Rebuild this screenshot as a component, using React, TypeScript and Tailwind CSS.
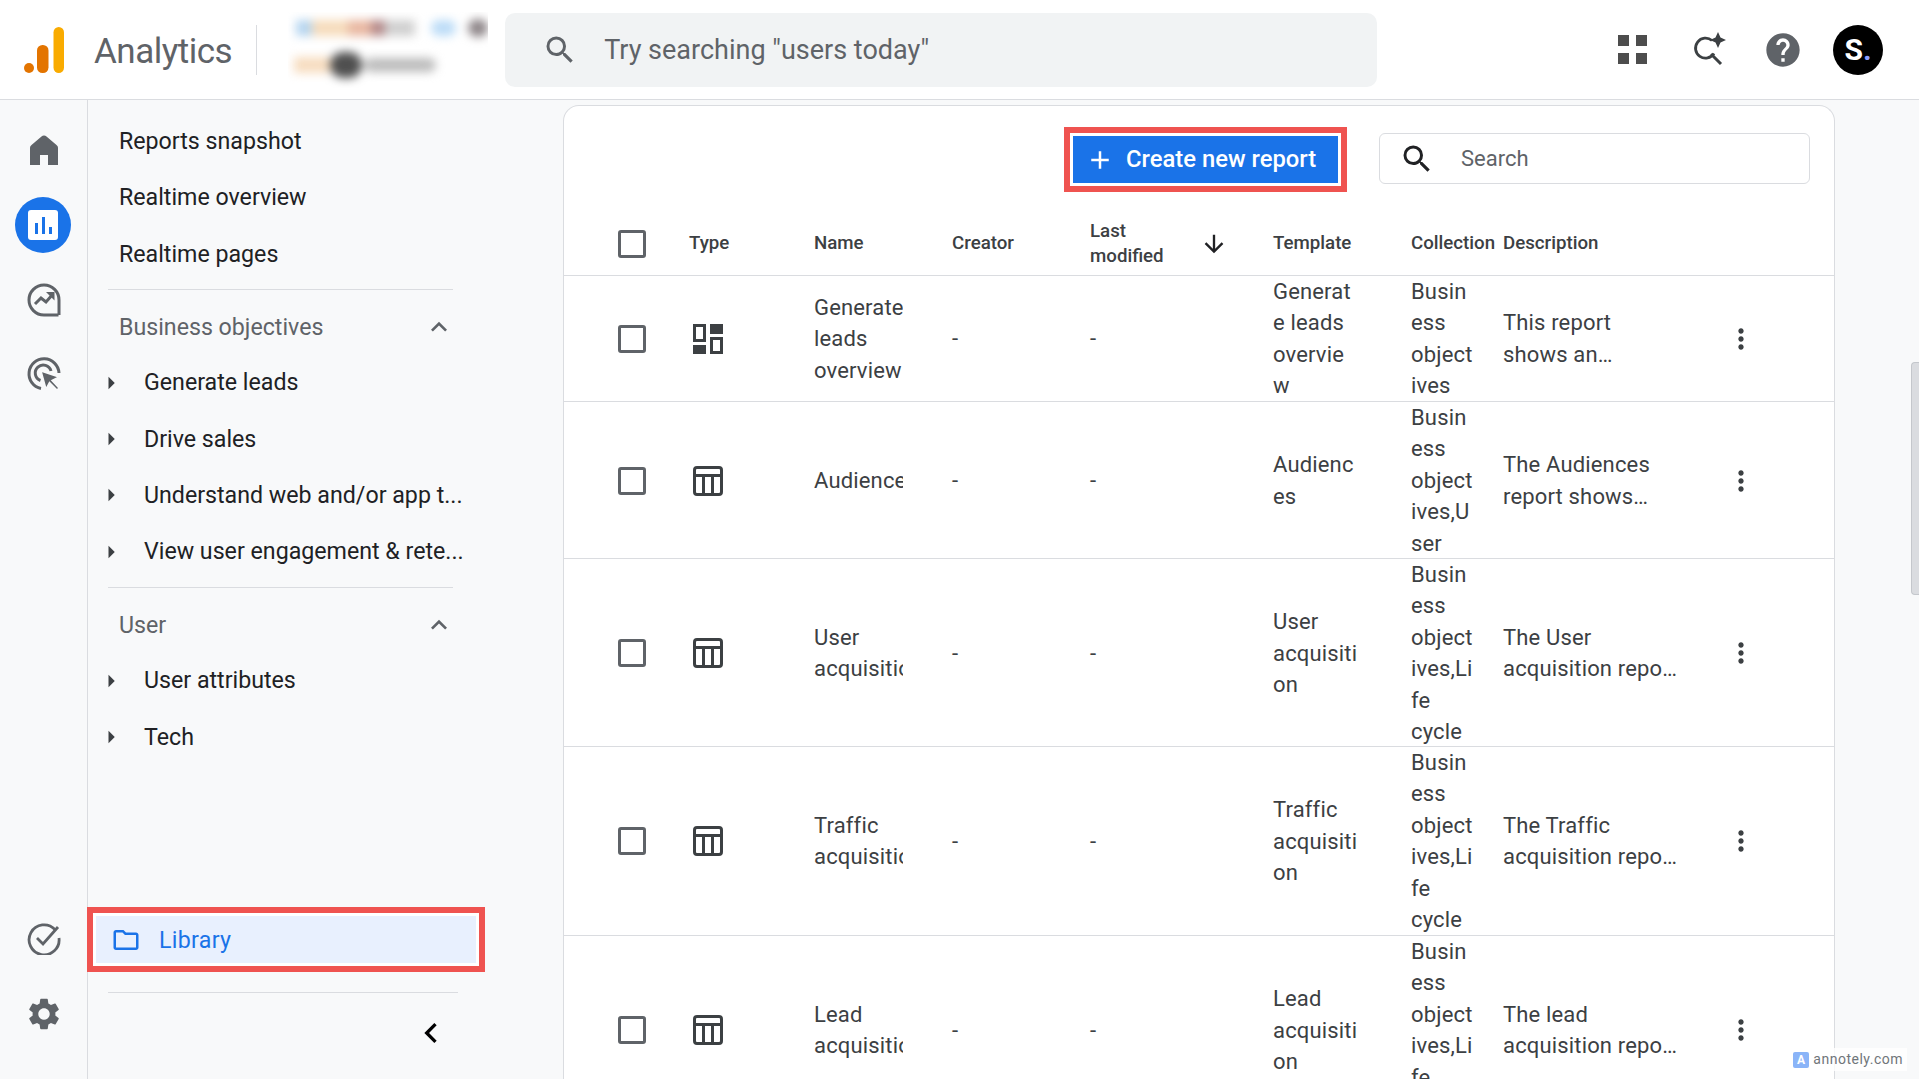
import React from "react";
import {
  MdSearch, MdHelp, MdSettings, MdMoreVert, MdArrowDownward, MdExpandLess,
  MdChevronLeft, MdAdd, MdOutlineFolder, MdArrowRight,
} from "react-icons/md";

const Logo = () => (
  <svg width="40" height="46" viewBox="0 0 40 46">
    <rect x="29.500" y="0" width="10.500" height="46" rx="5.250" fill="#f9ab00" />
    <rect x="13" y="18" width="11.500" height="28" rx="5.500" fill="#e37400" />
    <circle cx="5" cy="41" r="5" fill="#e37400" />
  </svg>
);

const AppsIcon = () => (
  <svg width="30" height="30" viewBox="0 0 30 30" fill="#4d4d4d">
    <rect x="0" y="0" width="11" height="11" />
    <rect x="18" y="0" width="11" height="11" />
    <rect x="0" y="18" width="11" height="11" />
    <rect x="18" y="18" width="11" height="11" />
  </svg>
);

const SparkSearch = () => (
  <svg width="36" height="36" viewBox="0 0 36 36" fill="none">
    <path d="M21 8.500a10 10 0 1 0 2 13" stroke="#3c4043" strokeWidth="2.800" />
    <path d="M20 22l10 10" stroke="#3c4043" strokeWidth="3" />
    <path d="M27 0l2.500 5.500L35 8l-5.500 2.500L27 16l-2.500-5.500L19 8l5.500-2.500z" fill="#3c4043" />
  </svg>
);

const HomeIcon = () => (
  <svg width="28" height="30" viewBox="0 0 28 30" fill="#5f6368">
    <path d="M14 0.500C15 0.500 15.800 1 16.500 1.600L26.500 10C27.500 10.800 28 11.800 28 13V30H18V20H10V30H0V13C0 11.800 0.500 10.800 1.500 10L11.500 1.600C12.200 1 13 0.500 14 0.500Z" />
  </svg>
);

const ReportsIcon = () => (
  <div className="flex h-[56px] w-[56px] items-center justify-center rounded-full bg-[#1a73e8]">
    <svg width="30" height="30" viewBox="0 0 30 30">
      <rect width="30" height="30" rx="3" fill="#fff" />
      <rect x="7" y="13" width="3" height="11" fill="#1a73e8" />
      <rect x="14" y="7" width="3" height="17" fill="#1a73e8" />
      <rect x="21" y="17" width="3" height="7" fill="#1a73e8" />
    </svg>
  </div>
);

const ExploreIcon = () => (
  <svg width="34" height="34" viewBox="0 0 34 34" fill="none" stroke="#5f6368" strokeWidth="3">
    <path d="M31.500 32H17A15 15 0 1 1 32 17V32" />
    <path d="M8 21l6-6 5 4 7-8" strokeWidth="3" />
    <path d="M19 9h8.500v8.500" fill="#5f6368" stroke="none" />
    <circle cx="28.500" cy="28.500" r="1.500" fill="#f8f9fa" stroke="none" />
  </svg>
);

const TargetIcon = () => (
  <svg width="36" height="36" viewBox="0 0 36 36" fill="none" stroke="#5f6368" strokeWidth="3">
    <path d="M15 32.500A15 15 0 1 1 33 17" />
    <path d="M14.500 24.500A8 8 0 1 1 25 15" />
    <path d="M15 15l18 6-7 3.500L33 32l-2 2-7.500-7.500L20 33z" fill="#5f6368" stroke="#f8f9fa" strokeWidth="1.500" />
  </svg>
);

const CheckIcon = () => (
  <svg width="34" height="34" viewBox="0 0 34 34" fill="none" stroke="#5f6368" strokeWidth="2.800">
    <path d="M28 8.500A15 15 0 1 0 32 17" />
    <path d="M10 17l6 6L31 6" />
  </svg>
);

const Dashboard = () => (
  <svg width="30" height="30" viewBox="0 0 30 30" fill="#3c4043">
    <path d="M0 0h13v18H0zM3 3v12h7V3z" fillRule="evenodd" />
    <rect x="17" y="0" width="13" height="10" />
    <path d="M17 13h13v17H17zM20 16v11h7V16z" fillRule="evenodd" />
    <rect x="0" y="21" width="13" height="9" />
  </svg>
);

const TableIcon = () => (
  <svg width="30" height="30" viewBox="0 0 30 30" fill="none" stroke="#3c4043" strokeWidth="3">
    <rect x="1.500" y="1.500" width="27" height="27" rx="2.500" />
    <path d="M1.500 9.500h27M10.500 9.500v19M19.500 9.500v19" />
  </svg>
);

const Box = () => <div className="h-[28px] w-[28px] rounded-[3px] border-[3px] border-[#5f6368]" />;

const blurs = (
  <div className="ml-[31px] h-[76px] w-[200px] shrink-0 overflow-hidden pt-[7px]">
    <div className="flex h-[18px] items-center pl-[8px] blur-[5px]">
      <div className="flex h-[16px] w-[120px] overflow-hidden">
        <div className="w-[16px] bg-[#b5d5f0]" />
        <div className="w-[36px] bg-[#f6dcbc]" />
        <div className="w-[24px] bg-[#e9b8a2]" />
        <div className="w-[14px] bg-[#b58a8a]" />
        <div className="w-[30px] bg-[#d0d0d0]" />
      </div>
      <div className="ml-[16px] h-[16px] w-[26px] rounded-full bg-[#bcdcf7]" />
      <div className="ml-[12px] h-[18px] w-[20px] rounded-full bg-[#8d8588]" />
    </div>
    <div className="mt-[14px] flex h-[28px] items-center pl-[6px] blur-[5px]">
      <div className="h-[16px] w-[36px] bg-[#f7ddc0]" />
      <div className="h-[26px] w-[32px] rounded-full bg-[#4f4f4f]" />
      <div className="ml-[2px] h-[14px] w-[72px] rounded-full bg-[#bcbcbc]" />
    </div>
  </div>
);

const topItems = ["Reports snapshot", "Realtime overview", "Realtime pages"];
const bizItems = ["Generate leads", "Drive sales", "Understand web and/or app t...", "View user engagement & rete..."];
const userItems = ["User attributes", "Tech"];

const Item = ({ t }: { t: string }) => (
  <div className="flex h-[56.300px] items-center">
    <MdArrowRight className="ml-[8px] h-[30px] w-[30px] shrink-0 text-[#3c4043]" />
    <span className="ml-[18px] whitespace-nowrap text-[23.200px] text-[#202124]">{t}</span>
  </div>
);

const Section = ({ t }: { t: string }) => (
  <div className="flex h-[56px] items-center justify-between pl-[31px] pr-[20px] text-[23.200px] text-[#5f6368]">
    <span className="pt-[1px]">{t}</span>
    <MdExpandLess className="h-[32px] w-[32px]" />
  </div>
);

const Sidebar = () => (
  <aside className="flex w-[475px] shrink-0">
    <nav className="flex w-[88px] shrink-0 flex-col items-center border-r border-[#dadce0] pt-[31px]">
      <div className="flex h-[38px] items-center"><HomeIcon /></div>
      <div className="mr-[2px] mt-[28px]"><ReportsIcon /></div>
      <div className="mt-[29px] flex h-[36px] items-center"><ExploreIcon /></div>
      <div className="mt-[38px] flex h-[36px] items-center"><TargetIcon /></div>
      <div className="mt-auto flex h-[36px] items-center"><CheckIcon /></div>
      <div className="mb-[47px] mt-[40px] flex h-[36px] items-center"><MdSettings className="h-[38px] w-[38px] text-[#5f6368]" /></div>
    </nav>
    <div className="flex min-w-0 flex-1 flex-col">
      <div className="pt-[13px]">
        {topItems.map((t) => (
          <div key={t} className="flex h-[56.500px] items-center pl-[31px] text-[23.200px] text-[#202124]">{t}</div>
        ))}
      </div>
      <div className="ml-[20px] mr-[22px] mt-[6px] h-px bg-[#dadce0]" />
      <div className="pt-[9px]">
        <Section t="Business objectives" />
        {bizItems.map((t) => <Item key={t} t={t} />)}
      </div>
      <div className="ml-[20px] mr-[22px] mt-[7px] h-px bg-[#dadce0]" />
      <div className="pt-[9px]">
        <Section t="User" />
        {userItems.map((t) => <Item key={t} t={t} />)}
      </div>
      <div className="mt-auto">
        <div className="-ml-px w-[398px] border-[6px] border-[#ef5350] bg-white p-[3px]">
          <div className="flex h-[47px] items-center bg-[#e8f0fe] pl-[15px] text-[23.200px] text-[#1a73e8]">
            <MdOutlineFolder className="h-[30px] w-[30px]" />
            <span className="ml-[18px] pt-[2px] tracking-[0.3px]">Library</span>
          </div>
        </div>
        <div className="ml-[20px] mr-[17px] mt-[20px] h-px bg-[#dadce0]" />
        <div className="flex h-[86px] items-start justify-end pr-[24px] pt-[20px]">
          <MdChevronLeft className="h-[40px] w-[40px] text-black" />
        </div>
      </div>
    </div>
  </aside>
);

type Row = { h: string; icon: "d" | "t"; name: string; template: string; collection: string; desc: string[] };
const rows: Row[] = [
  { h: "h-[126px] pb-[2px]", icon: "d", name: "Generate leads overview", template: "Generate leads overview", collection: "Business objectives", desc: ["This report", "shows an…"] },
  { h: "h-[157px] pb-[2px]", icon: "t", name: "Audience", template: "Audiences", collection: "Business objectives,User", desc: ["The Audiences", "report shows…"] },
  { h: "h-[188px] pb-[2px]", icon: "t", name: "User acquisition", template: "User acquisition", collection: "Business objectives,Life cycle", desc: ["The User", "acquisition repo…"] },
  { h: "h-[189px]", icon: "t", name: "Traffic acquisition", template: "Traffic acquisition", collection: "Business objectives,Life cycle", desc: ["The Traffic", "acquisition repo…"] },
  { h: "h-[189px]", icon: "t", name: "Lead acquisition", template: "Lead acquisition", collection: "Business objectives,Life cycle", desc: ["The lead", "acquisition repo…"] },
];

const gridCols = "grid grid-cols-[125px_125px_138px_138px_183px_138px_92px_214px_1fr] items-center";

const Table = () => (
  <div>
    <div className={`${gridCols} h-[64px] pt-[1px] text-[18.700px] font-medium leading-[25px] text-[#3c4043]`}>
      <div className="flex justify-center pl-[10px]"><Box /></div>
      <div>Type</div>
      <div>Name</div>
      <div>Creator</div>
      <div className="flex items-center">
        <div className="w-[110px]">Last modified</div>
        <MdArrowDownward className="h-[28px] w-[28px] text-[#202124]" />
      </div>
      <div>Template</div>
      <div className="whitespace-nowrap">Collection</div>
      <div>Description</div>
      <div />
    </div>
    {rows.map((r, i) => (
      <div key={i} className={`${gridCols} ${r.h} border-t border-[#dadce0] text-[22px] leading-[31.400px] tracking-[0.16px] text-[#3c4043]`}>
        <div className="flex justify-center pl-[10px]"><Box /></div>
        <div className="pl-[4px]">{r.icon === "d" ? <Dashboard /> : <TableIcon />}</div>
        <div className="max-h-[96px] w-[89px] overflow-hidden">{r.name}</div>
        <div>-</div>
        <div>-</div>
        <div className="w-[87px] break-words">{r.template}</div>
        <div className="w-[64px] break-words">{r.collection}</div>
        <div className="whitespace-nowrap">
          {r.desc.map((d) => <div key={d}>{d}</div>)}
        </div>
        <div className="flex justify-start pl-[8px]"><MdMoreVert className="h-[32px] w-[32px] text-[#3c4043]" /></div>
      </div>
    ))}
  </div>
);

export default function App() {
  return (
    <div className="relative flex h-[1079px] w-[1919px] flex-col overflow-hidden bg-[#f8f9fa] font-['Roboto',sans-serif]">
      <header className="flex h-[100px] shrink-0 items-center border-b border-[#dadce0] bg-white">
        <div className="ml-[24px]"><Logo /></div>
        <span className="ml-[30px] mt-[5px] text-[35px] tracking-[-0.5px] text-[#5f6368]">Analytics</span>
        <div className="ml-[24px] h-[50px] w-px bg-[#dadce0]" />
        {blurs}
        <div className="ml-[17px] flex h-[74px] w-[872px] items-center rounded-[10px] bg-[#f1f3f4] pl-[37px]">
          <MdSearch className="h-[36px] w-[36px] text-[#5f6368]" />
          <span className="ml-[26px] pt-[2px] text-[27px] text-[#5f6368]">Try searching "users today"</span>
        </div>
        <div className="ml-auto flex items-center pr-[36px]">
          <AppsIcon />
          <div className="ml-[43px]"><SparkSearch /></div>
          <MdHelp className="ml-[36px] h-[40px] w-[40px] text-[#5f6368]" />
          <div className="ml-[30px] flex h-[50px] w-[50px] items-center justify-center rounded-full bg-black text-[30px] font-bold text-white">
            S<span className="text-[#8c9eff]">.</span>
          </div>
        </div>
      </header>
      <div className="flex min-h-0 flex-1">
        <Sidebar />
        <main className="ml-[88px] mt-[5px] w-[1272px] shrink-0 rounded-t-[16px] border border-b-0 border-[#dadce0] bg-white">
          <div className="relative h-[105px]">
            <div className="flex items-start justify-end pr-[24px] pt-[27px]">
              <div className="flex h-[51px] w-[431px] items-center rounded-[6px] border border-[#dadce0] pl-[19px] text-[22px] text-[#5f6368]">
                <MdSearch className="h-[36px] w-[36px] text-[#202124]" />
                <span className="ml-[26px]">Search</span>
              </div>
            </div>
            <div className="absolute left-[500px] top-[21px] border-[6px] border-[#ef5350] bg-white p-[3px]">
              <div className="flex h-[47px] w-[265px] items-center bg-[#1a73e8] pl-[12px] text-[23.800px] font-medium text-white">
                <MdAdd className="h-[30px] w-[30px]" />
                <span className="ml-[11px] whitespace-nowrap">Create new report</span>
              </div>
            </div>
          </div>
          <Table />
        </main>
      </div>
      <div className="absolute right-0 top-[362px] h-[233px] w-[8px] rounded-l-[4px] border border-r-0 border-[#c4c7cc] bg-[#dadce0]" />
      <div className="absolute bottom-[8px] right-[12px] flex h-[23px] items-center gap-[4px] bg-white/80 px-[4px] text-[14px] tracking-[0.5px] text-[#70757a]">
        <span className="flex h-[16px] w-[16px] items-center justify-center rounded-[2px] bg-[#8ab4f8] text-[12px] font-bold text-white">A</span>
        annotely.com
      </div>
    </div>
  );
}
